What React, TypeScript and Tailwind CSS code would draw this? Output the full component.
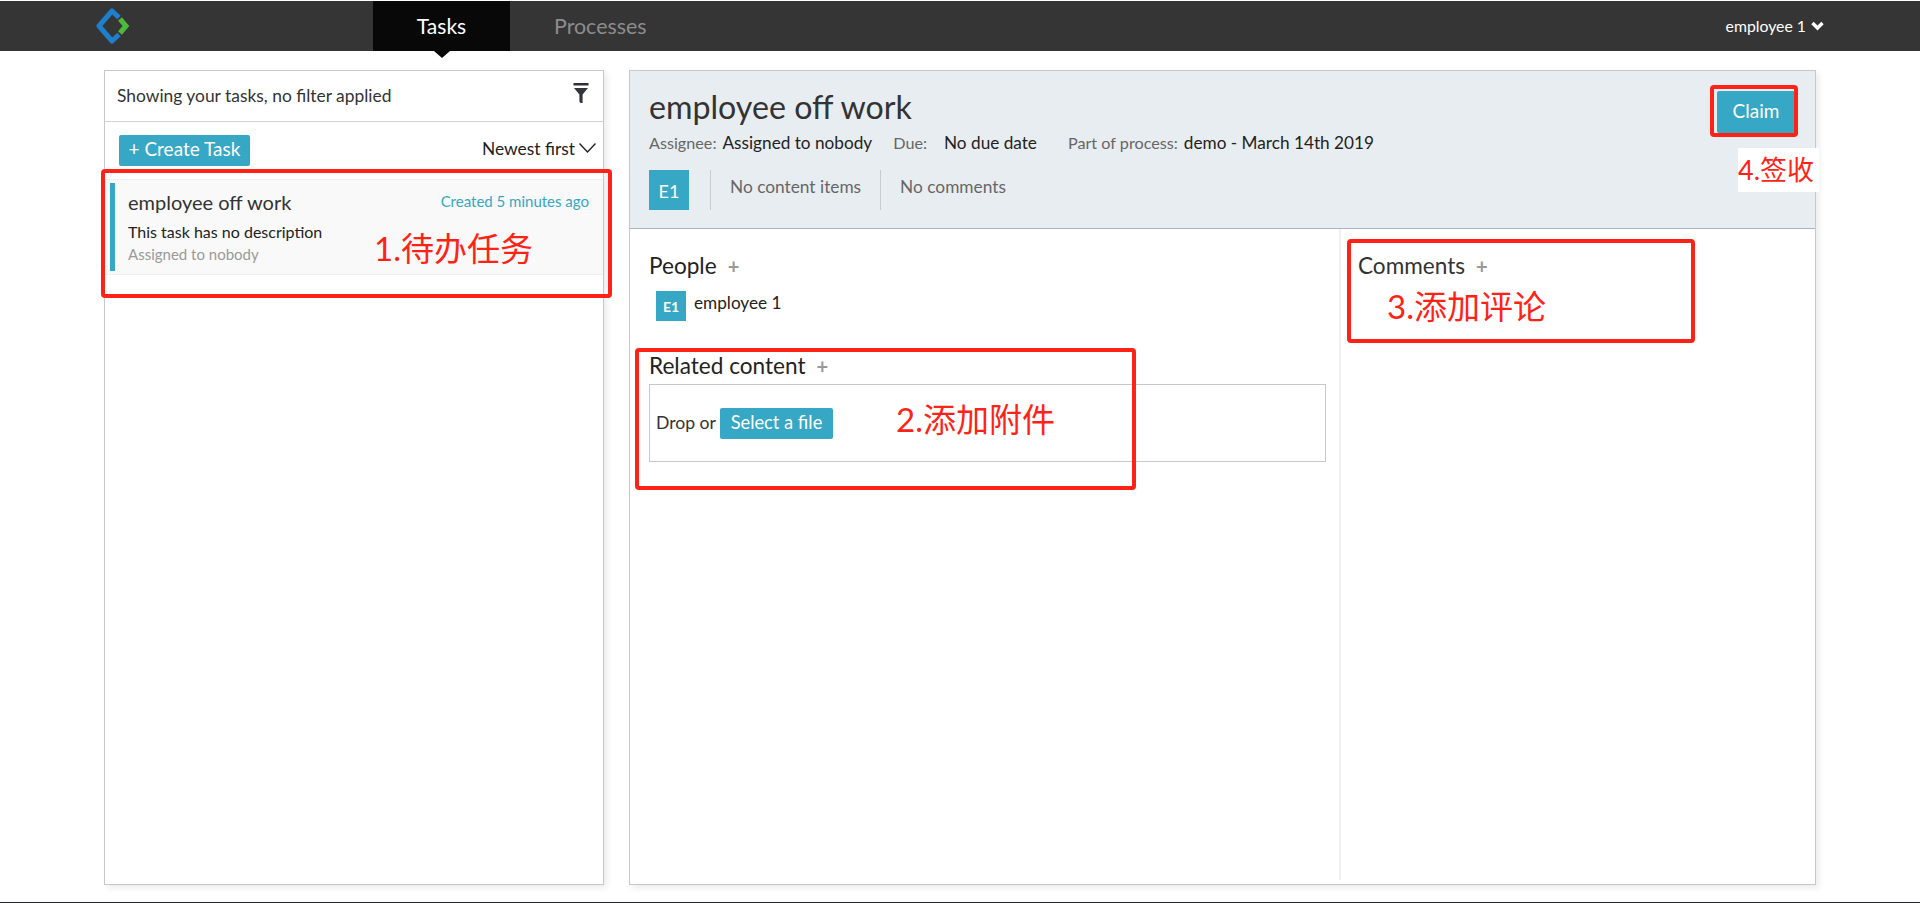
const lato = { fontFamily: '"Lato", "Noto Sans CJK SC", sans-serif' };

function Logo() {
  return (
    <svg aria-hidden="true" width="34" height="36" viewBox="0 0 34 36" fill="none">
      <path d="M23 9.5 L16 3 L3 18 L16 33 L23 26.5" stroke="#1f7fcc" strokeWidth="5" strokeLinejoin="round" />
      <path d="M24 11 L30 18 L24 25" stroke="#4db93d" strokeWidth="5" />
    </svg>
  );
}

function PlusMark() {
  return <span className="text-[20px] leading-none font-bold text-[#999]">+</span>;
}

function Avatar({ small }: { small?: boolean }) {
  return (
    <div
      className={
        small
          ? "flex h-[30px] w-[30px] shrink-0 items-center justify-center bg-[#36a7c4] pt-[2px] text-[14px] font-bold text-white"
          : "flex h-10 w-10 shrink-0 items-center justify-center bg-[#36a7c4] pt-[2px] text-[18px] text-white"
      }
    >
      E1
    </div>
  );
}

function TaskList() {
  return (
    <section className="flex w-[500px] shrink-0 flex-col border border-[#c8c8c8] shadow-[3px_3px_6px_rgba(0,0,0,0.08)]">
      <div className="flex h-[51px] items-center justify-between border-b border-[#d2d2d2] pl-3 pr-[14px] text-[17.4px] text-[#333]">
        <span>Showing your tasks, no filter applied</span>
        <svg aria-hidden="true" className="mb-[7px]" width="16" height="20" viewBox="0 0 16 20">
          <rect x="0.5" y="0" width="15" height="2.5" fill="#2f2f3a" />
          <path d="M1 5 H15 L9.6 11.5 V20 H7.6 L6.4 18.5 V11.5 Z" fill="#33343c" />
        </svg>
      </div>

      <div className="flex items-center justify-between pl-[14px] pr-[7px] pt-[13px]">
        <button className="h-[31px] w-[131px] rounded-[2px] bg-[#36a7c4] pb-[2px] text-[19px] text-white" type="button">
          + Create Task
        </button>
        <div className="mb-[2px] flex items-center gap-[4px] text-[17.4px] text-[#222]">
          Newest first
          <svg aria-hidden="true" className="mb-[3px]" width="17" height="10" viewBox="0 0 17 10" fill="none">
            <path d="M0.5 0.5 L8.5 9 L16.5 0.5" stroke="#222" strokeWidth="1.4" />
          </svg>
        </div>
      </div>

      <div className="mt-[13px] h-[96px] border-y border-[#f0f0f0] bg-[#f9f9f9] py-[3px] pl-[5px]">
        <div className="h-full border-l-[5px] border-[#36a7c4] pl-[13px] pr-[14px]">
          <div className="flex justify-between pt-[4px]">
            <span className="text-[20px] leading-[30px] text-[#333]">employee off work</span>
            <span className="mt-px text-[15px] leading-[26px] text-[#36a7c4]">Created 5 minutes ago</span>
          </div>
          <p className="mt-[5px] text-[16px] leading-5 text-[#222]">This task has no description</p>
          <p className="mt-[2px] text-[15px] leading-5 text-[#999]">Assigned to nobody</p>
        </div>
      </div>
    </section>
  );
}

function TaskDetail() {
  return (
    <section className="flex w-[1187px] shrink-0 flex-col border border-[#c8c8c8] shadow-[3px_3px_6px_rgba(0,0,0,0.08)]">
      <header className="relative h-[158px] shrink-0 border-b border-[#aab2bd] bg-[#e8edf1] px-[19px] pt-[17px]">
        <h1 className="text-[32.2px] leading-[38px] text-[#333]">employee off work</h1>
        <div className="mt-[5px] flex items-center text-[17.2px] leading-6 text-[#222]">
          <span className="text-[16.2px] text-[#666]">Assignee:</span>
          <span className="ml-[6px]">Assigned to nobody</span>
          <span className="ml-[21px] text-[16.2px] text-[#666]">Due:</span>
          <span className="ml-[17px]">No due date</span>
          <span className="ml-[31px] text-[16.2px] text-[#666]">Part of process:</span>
          <span className="ml-[6px]">demo - March 14th 2019</span>
        </div>
        <div className="mt-[15px] flex h-10 text-[17.3px] text-[#666]">
          <Avatar />
          <div className="ml-[21px] border-l border-[#c8ccd0] pl-[19px] leading-[33px]">No content items</div>
          <div className="ml-[19px] border-l border-[#c8ccd0] pl-[19px] leading-[33px]">No comments</div>
        </div>
        <button
          className="absolute right-[20px] top-[20px] h-[42px] w-[78px] rounded-[2px] bg-[#36a7c4] pb-px text-[19px] text-white"
          type="button"
        >
          Claim
        </button>
      </header>

      <div className="flex flex-1 pb-1">
        <div className="w-[711px] shrink-0 border-r-2 border-[#f0f0f0] pl-[19px] pr-[13px] pt-[23px]">
          <div className="flex items-center gap-[11px] text-[22.6px] leading-7 text-[#222]">
            People <PlusMark />
          </div>
          <div className="mt-[11px] ml-[7px] flex gap-2 text-[17.2px] leading-6 text-[#222]">
            <Avatar small />
            employee 1
          </div>
          <div className="mt-[31px] flex items-center gap-[11px] text-[22.6px] leading-7 text-[#222]">
            Related content <PlusMark />
          </div>
          <div className="mt-[4px] flex h-[78px] items-center border border-[#c8c8c8] pl-[6px] text-[17.6px] text-[#333]">
            Drop or
            <button className="ml-[4px] h-[31px] w-[113px] rounded-[2px] bg-[#36a7c4] pb-px text-[18.3px] text-white" type="button">
              Select a file
            </button>
          </div>
        </div>
        <div className="flex-1 pl-[17px] pt-[23px]">
          <div className="flex items-center gap-[11px] text-[22.6px] leading-7 text-[#333]">
            Comments <PlusMark />
          </div>
        </div>
      </div>
    </section>
  );
}

export default function App() {
  return (
    <div className="relative flex h-[903px] flex-col overflow-hidden bg-white pt-px" style={lato}>
      <nav className="relative flex h-[50px] shrink-0 items-center bg-[#353535] pl-[96px] pr-[96px]">
        <Logo />
        <div className="ml-[243px] flex h-full">
          <div className="relative flex w-[137px] items-center justify-center bg-[#080808] text-[21px] text-white">
            Tasks
            <span className="absolute left-[61px] top-full border-x-[8px] border-t-[7px] border-x-transparent border-t-[#080808]" />
          </div>
          <div className="flex items-center pl-[44px] text-[21.4px] text-[#8c8c8c]">Processes</div>
        </div>
        <div className="ml-auto flex items-center gap-[5px] text-[15.8px] text-white">
          employee 1
          <svg aria-hidden="true" width="13" height="10" viewBox="0 0 13 10" fill="none">
            <path d="M1.5 2 L6.5 7 L11.5 2" stroke="#fff" strokeWidth="3.4" />
          </svg>
        </div>
      </nav>

      <main className="flex min-h-0 flex-1 gap-[25px] pb-[17px] pl-[104px] pt-[19px]">
        <TaskList />
        <TaskDetail />
      </main>
      <div className="h-px shrink-0 bg-[#1c2428]" />

      {/* hand-drawn annotations that sit over the screenshot */}
      <div className="absolute left-[101px] top-[169px] h-[129px] w-[511px] rounded-[4px] border-4 border-[#ff2317]" />
      <div className="absolute left-[635px] top-[348px] h-[142px] w-[501px] rounded-[4px] border-4 border-[#ff2317]" />
      <div className="absolute left-[1347px] top-[239px] h-[104px] w-[348px] rounded-[4px] border-4 border-[#ff2317]" />
      <div className="absolute left-[1710px] top-[85px] h-[52px] w-[88px] rounded-[4px] border-4 border-[#ff2317]" />
      <span className="absolute left-[374px] top-[226px] text-[33px] leading-[44px] text-[#ff2317]">1.待办任务</span>
      <span className="absolute left-[896px] top-[397px] text-[33px] leading-[44px] text-[#ff2317]">2.添加附件</span>
      <span className="absolute left-[1387px] top-[284px] text-[33px] leading-[44px] text-[#ff2317]">3.添加评论</span>
      <span className="absolute left-[1738px] top-[148px] flex h-[44px] w-[81px] items-center bg-white text-[27px] text-[#ff2317]">
        4.签收
      </span>
    </div>
  );
}
